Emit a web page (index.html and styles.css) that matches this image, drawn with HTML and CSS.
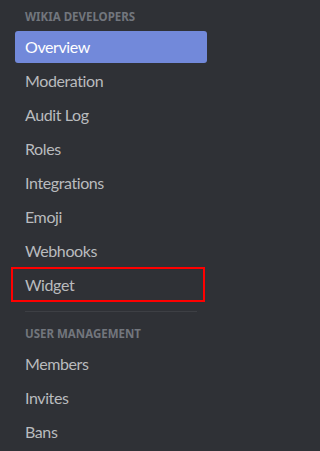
FILE: index.html
```html
<!DOCTYPE html>
<html>
<head>
<meta charset="utf-8">
<link rel="stylesheet" href="styles.css">
</head>
<body>
<nav class="sidebar">
  <div class="header">Wikia Developers</div>
  <div class="item selected">Overview</div>
  <div class="item">Moderation</div>
  <div class="item">Audit Log</div>
  <div class="item">Roles</div>
  <div class="item">Integrations</div>
  <div class="item">Emoji</div>
  <div class="item">Webhooks</div>
  <div class="item highlighted">Widget</div>
  <div class="separator"></div>
  <div class="header">User Management</div>
  <div class="item">Members</div>
  <div class="item">Invites</div>
  <div class="item">Bans</div>
</nav>
</body>
</html>
```

FILE: styles.css
```css
html, body {
  margin: 0;
  padding: 0;
  background: #2f3136;
  height: 451px;
  overflow: hidden;
}

.sidebar {
  display: flex;
  flex-direction: column;
  width: 192px;
  padding: 3px 0 0 15px;
  font-family: Lato, "Noto Sans", sans-serif;
}

.header {
  padding: 6px 10px;
  font-family: "Noto Sans", Lato, sans-serif;
  font-size: 11.5px;
  line-height: 16px;
  font-weight: 700;
  text-transform: uppercase;
  letter-spacing: 0;
  color: #72767d;
}

.item {
  position: relative;
  height: 32px;
  box-sizing: border-box;
  padding: 6px 10px;
  margin-bottom: 2px;
  font-size: 16px;
  line-height: 20px;
  color: #b9bbbe;
  border-radius: 3px;
  letter-spacing: -0.4px;
}

.item.selected {
  background: #7289da;
  color: #ffffff;
}

.item.highlighted::after {
  content: "";
  position: absolute;
  left: -4px;
  top: -2px;
  width: 194px;
  height: 35px;
  box-sizing: border-box;
  border: 2px solid #ff0000;
}

.separator {
  height: 1px;
  margin: 8px 10px;
  background: #3d3f44;
}
```
